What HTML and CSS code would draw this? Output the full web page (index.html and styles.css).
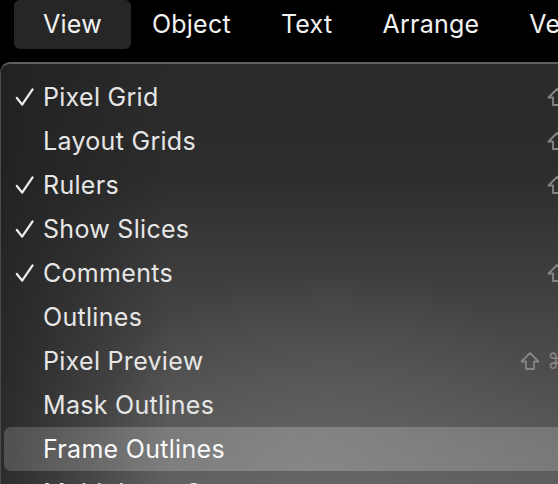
FILE: index.html
```html
<!DOCTYPE html>
<html>
<head>
<meta charset="utf-8">
<link rel="stylesheet" href="styles.css">
</head>
<body>
<div class="menubar">
  <div class="title active">View</div>
  <div class="title">Object</div>
  <div class="title">Text</div>
  <div class="title">Arrange</div>
  <div class="title">Vector</div>
</div>
<div class="panel">
  <div class="row"><span class="check"><svg viewBox="0 0 20 20"><path d="M2 10.5 L7.5 17.5 L18.5 1.5"/></svg></span><span class="label">Pixel Grid</span><span class="keys"><span class="k"></span><span class="k"><svg viewBox="0 0 20 20"><path d="M10 2 L18.5 10.5 H14 V18 H6 V10.5 H1.5 Z"/></svg></span></span></div>
  <div class="row"><span class="check"></span><span class="label">Layout Grids</span><span class="keys"><span class="k"></span><span class="k"><svg viewBox="0 0 20 20"><path d="M10 2 L18.5 10.5 H14 V18 H6 V10.5 H1.5 Z"/></svg></span></span></div>
  <div class="row"><span class="check"><svg viewBox="0 0 20 20"><path d="M2 10.5 L7.5 17.5 L18.5 1.5"/></svg></span><span class="label">Rulers</span><span class="keys"><span class="k"></span><span class="k"><svg viewBox="0 0 20 20"><path d="M10 2 L18.5 10.5 H14 V18 H6 V10.5 H1.5 Z"/></svg></span></span></div>
  <div class="row"><span class="check"><svg viewBox="0 0 20 20"><path d="M2 10.5 L7.5 17.5 L18.5 1.5"/></svg></span><span class="label">Show Slices</span></div>
  <div class="row"><span class="check"><svg viewBox="0 0 20 20"><path d="M2 10.5 L7.5 17.5 L18.5 1.5"/></svg></span><span class="label">Comments</span><span class="keys"><span class="k"></span><span class="k"><svg viewBox="0 0 20 20"><path d="M10 2 L18.5 10.5 H14 V18 H6 V10.5 H1.5 Z"/></svg></span></span></div>
  <div class="row"><span class="check"></span><span class="label">Outlines</span></div>
  <div class="row"><span class="check"></span><span class="label">Pixel Preview</span><span class="keys"><span class="k"><svg viewBox="0 0 20 20"><path d="M10 2 L18.5 10.5 H14 V18 H6 V10.5 H1.5 Z"/></svg></span><span class="k cmd">⌘</span></span></div>
  <div class="row"><span class="check"></span><span class="label">Mask Outlines</span></div>
  <div class="row selected"><span class="check"></span><span class="label">Frame Outlines</span></div>
  <div class="row"><span class="check"></span><span class="label">Multiplayer Cursors</span></div>
</div>
</body>
</html>
```
FILE: styles.css
```css
html, body {
  margin: 0;
  padding: 0;
  background: #000;
  width: 558px;
  height: 484px;
  overflow: hidden;
  font-family: "Inter", "Noto Sans", sans-serif;
}
.menubar {
  height: 62px;
  display: flex;
  align-items: flex-start;
  padding-left: 18px;
  white-space: nowrap;
}
.title {
  height: 49px;
  line-height: 48px;
  padding: 0 25px;
  border-radius: 6px;
  color: #f2f2f2;
  font-size: 25px;
  letter-spacing: 0.25px;
  flex: none;
}
.title.active {
  background: #262626;
  padding: 0 29px;
  margin: 0 -4px;
}
.panel {
  width: 640px;
  height: 440px;
  box-sizing: border-box;
  border-top: 2px solid #5e5e5e;
  border-left: 1px solid #4a4a4a;
  border-top-left-radius: 10px;
  padding-top: 11px;
  background:
    radial-gradient(ellipse 240px 200px at 330px 400px, rgba(110,110,110,0.5), rgba(110,110,110,0) 100%),
    linear-gradient(to right, rgba(32,32,32,0.8) 0px, rgba(32,32,32,0) 170px),
    linear-gradient(to bottom, #2a2a2a 0px, #2d2d2d 110px, #444 250px, #595959 380px, #5e5e5e 420px);
}
.row {
  display: flex;
  align-items: center;
  height: 44px;
  margin: 0 4px 0 3px;
  border-radius: 7px;
  color: #e6e6e6;
  font-size: 25px;
  letter-spacing: 0.3px;
  white-space: nowrap;
}
.row.selected {
  background: linear-gradient(to right, rgba(255,255,255,0.17), rgba(255,255,255,0.22) 45%, rgba(255,255,255,0.17));
  color: #fafafa;
}
.check {
  width: 39px;
  height: 20px;
  flex: none;
  box-sizing: border-box;
  padding-left: 11px;
  display: flex;
  align-items: center;
}
.check svg {
  width: 19px;
  height: 19px;
  fill: none;
  stroke: #ececec;
  stroke-width: 2.4;
  stroke-linecap: round;
  stroke-linejoin: round;
}
.label {
  flex: none;
}
.keys {
  position: absolute;
  left: 520px;
  display: flex;
}
.k {
  width: 27px;
  height: 22px;
  display: flex;
  align-items: center;
}
.k svg {
  width: 20px;
  height: 20px;
  fill: none;
  stroke: #858585;
  stroke-width: 1.8;
  stroke-linejoin: round;
}
.cmd {
  font-size: 22px;
  color: #858585;
  font-family: "DejaVu Sans", sans-serif;
}
```
